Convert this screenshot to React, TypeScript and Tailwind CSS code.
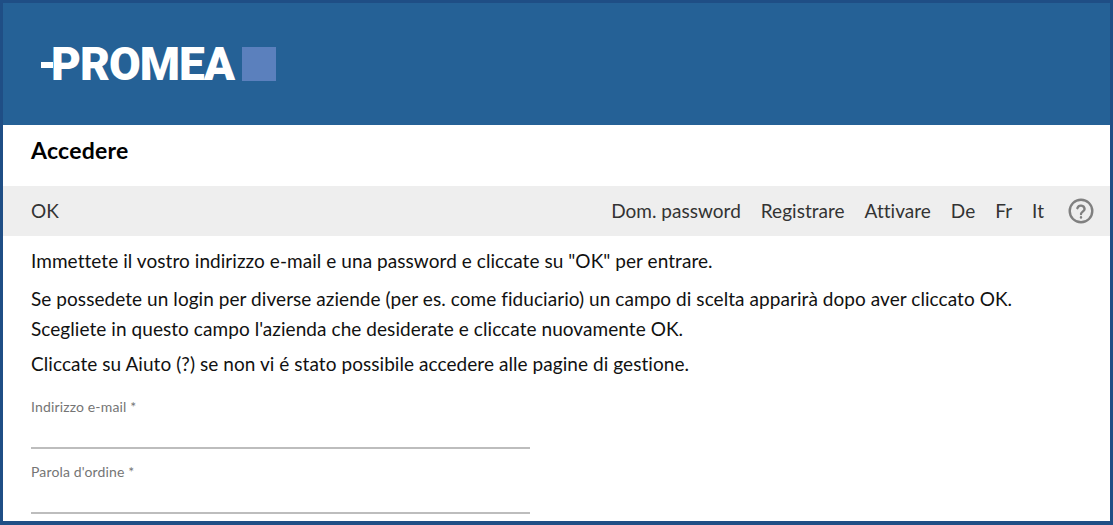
const font = { fontFamily: 'Lato, sans-serif' };

function Field({ label }: { label: string }) {
  return (
    <div className="w-[499px] pt-[14px]">
      <label className="block text-[14px] leading-[18px] tracking-[0.15px] text-[#757575]">{label}</label>
      <div className="mt-[31px] h-[2px] bg-[#bdbdbd]" />
    </div>
  );
}

export default function App() {
  return (
    <div
      className="w-[1113px] h-[525px] overflow-hidden border-[3px] border-b-[4px] border-[#1f4e85] bg-white text-[#111] flex flex-col"
      style={font}
    >
      <header className="h-[122px] bg-[#256196] flex items-start pl-[38px] pt-[44px] shrink-0">
        <div className="flex items-center">
          <div className="w-[12px] h-[6px] bg-white mt-[2px]" />
          <span
            className="text-white font-black text-[46px] leading-[33px] tracking-[-1px] ml-[-2px]"
            style={{ fontFamily: 'Roboto, sans-serif' }}
          >
            PROMEA
          </span>
          <div className="w-[34px] h-[34px] bg-[#5b80bd] ml-[8px]" />
        </div>
      </header>

      <h1 className="h-[61px] shrink-0 pl-[28px] pt-[9px] text-[23px] leading-[32px] tracking-[0.25px] font-bold text-black">
        Accedere
      </h1>

      <nav className="h-[50px] shrink-0 bg-[#eeeeee] pl-[28px] pr-[16px] flex items-center justify-between text-[19px] tracking-[0.02px] text-[#333]">
        <span>OK</span>
        <div className="flex items-center gap-[20px]">
          <span>Dom. password</span>
          <span>Registrare</span>
          <span>Attivare</span>
          <span>De</span>
          <span>Fr</span>
          <span>It</span>
          <svg className="ml-[4px]" width="26" height="26" viewBox="0 0 26 26" fill="none" stroke="#808080" strokeWidth="2.4" strokeLinecap="round">
            <circle cx="13" cy="13" r="11.3" />
            <path d="M9.4 10.2a3.7 3.7 0 0 1 7.2 .8c0 2.4-3.6 2.8-3.6 5" />
            <path d="M13 19.2v.3" />
          </svg>
        </div>
      </nav>

      <main className="pl-[28px] pt-[10px] text-[19px] leading-[30px] tracking-[0.06px] text-[#111]">
        <p>Immettete il vostro indirizzo e-mail e una password e cliccate su "OK" per entrare.</p>
        <p className="mt-[8px]">Se possedete un login per diverse aziende (per es. come fiduciario) un campo di scelta apparirà dopo aver cliccato OK.</p>
        <p>Scegliete in questo campo l'azienda che desiderate e cliccate nuovamente OK.</p>
        <p className="mt-[5px]">Cliccate su Aiuto (?) se non vi é stato possibile accedere alle pagine di gestione.</p>
        <form className="mt-[5px]">
          <Field label="Indirizzo e-mail *" />
          <Field label="Parola d'ordine *" />
        </form>
      </main>
    </div>
  );
}
